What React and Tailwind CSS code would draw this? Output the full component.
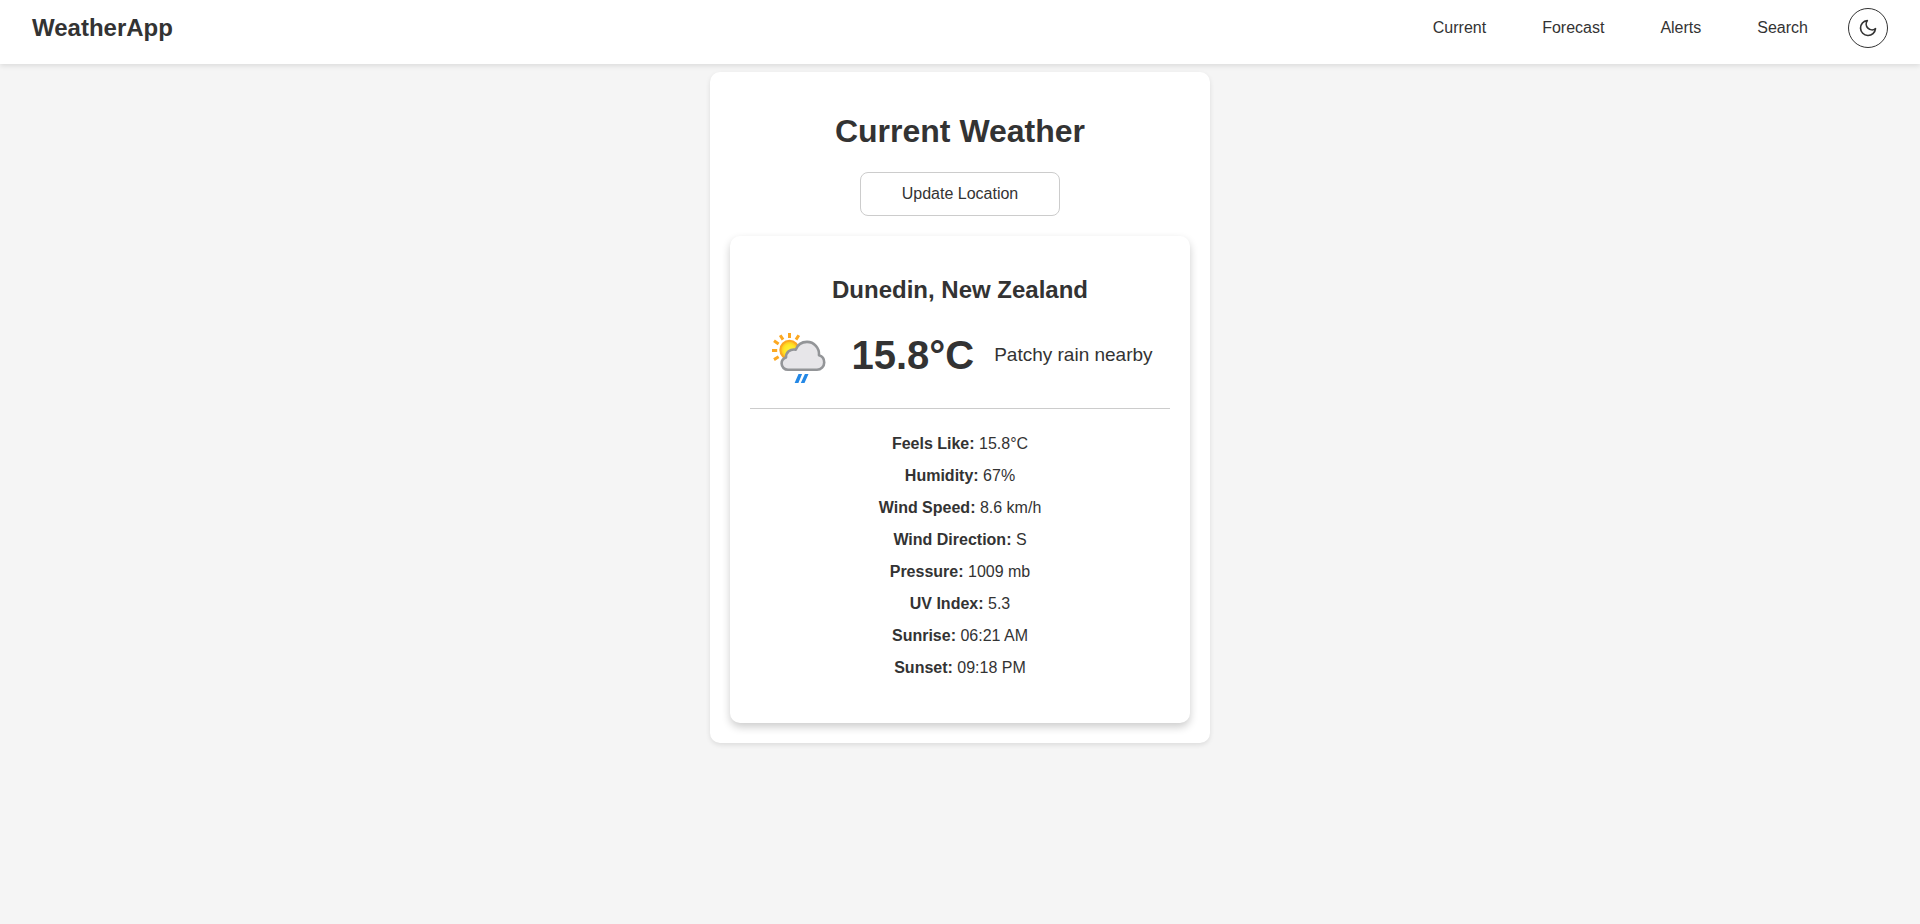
import { FiMoon } from "react-icons/fi";

const links = ["Current", "Forecast", "Alerts", "Search"];

const details = [
  ["Feels Like", "15.8°C"],
  ["Humidity", "67%"],
  ["Wind Speed", "8.6 km/h"],
  ["Wind Direction", "S"],
  ["Pressure", "1009 mb"],
  ["UV Index", "5.3"],
  ["Sunrise", "06:21 AM"],
  ["Sunset", "09:18 PM"],
];

function PatchyRainIcon() {
  return (
    <svg viewBox="0 0 64 64" className="size-16 shrink-0" role="img" aria-label="Patchy rain">
      <defs>
        <radialGradient id="sun">
          <stop offset="0" stopColor="#fff23a" />
          <stop offset="0.6" stopColor="#ffe626" />
          <stop offset="1" stopColor="#fdb81f" />
        </radialGradient>
      </defs>
      <g stroke="#fca821" strokeWidth="3">
        <path d="M22.5 10v5M31.8 12.2l-2.8 4.4M13.2 12.2l2.8 4.4M7 17.8l4.6 3.2M5 27.5h5.2M7 36.6l4.6-2.8" />
      </g>
      <circle cx="22.5" cy="27" r="9.2" fill="url(#sun)" stroke="#fca821" strokeWidth="2" />
      <path
        d="M21 46.8C17.5 46.8 14.6 44 14.6 40.6C14.6 37.8 16.4 35.4 19 34.6C18.8 29.6 23 25.6 28.8 26.6C30.5 22 34.8 18.9 40 18.9C47 18.9 52.6 24.8 52 32.2C55 33 57.2 35.8 57.2 39.4C57.2 43.6 54 46.8 50 46.8Z"
        fill="#e7e6e9"
        stroke="#939598"
        strokeWidth="2.6"
        strokeLinejoin="round"
      />
      <path d="M31.5 51h3.6l-3.7 9h-3.8zM37.9 51h3.6l-4 9h-3.7z" fill="#2488e6" />
    </svg>
  );
}

export default function App() {
  return (
    <div className="min-h-screen bg-[#f5f5f5] font-['Liberation_Sans',Arial,sans-serif] text-base text-[#333]">
      <header className="flex items-center justify-between bg-white px-8 pt-2 pb-4 shadow-[0_2px_5px_rgba(0,0,0,0.1)]">
        <div className="text-2xl font-bold">WeatherApp</div>
        <nav className="flex items-center gap-5">
          <ul className="flex gap-4">
            {links.map((link) => (
              <li key={link}>
                <a href={"#" + link.toLowerCase()} className="block px-5 leading-5">
                  {link}
                </a>
              </li>
            ))}
          </ul>
          <button
            type="button"
            aria-label="Toggle dark mode"
            className="flex size-10 items-center justify-center rounded-full border border-[#333]"
          >
            <FiMoon className="size-5" />
          </button>
        </nav>
      </header>

      <main className="mx-auto mt-2 max-w-[500px] rounded-[10px] bg-white p-5 text-center shadow-[0_2px_5px_rgba(0,0,0,0.1)]">
        <h1 className="mt-[21px] mb-[23px] text-[32px] leading-9 font-bold">Current Weather</h1>
        <button type="button" className="h-11 w-[200px] rounded-lg border border-[#ccc]">
          Update Location
        </button>

        <section className="mt-5 rounded-[10px] bg-white p-5 shadow-[0_4px_8px_rgba(0,0,0,0.2)]">
          <h2 className="mt-5 mb-[19px] text-2xl leading-7 font-bold">Dunedin, New Zealand</h2>
          <div className="flex items-center justify-center gap-5 border-b border-[#ccc] pb-[21px]">
            <PatchyRainIcon />
            <span className="text-[40px] leading-none font-bold">15.8°C</span>
            <span className="text-[19px]">Patchy rain nearby</span>
          </div>
          <ul className="pt-[19px] pb-[19px] leading-8">
            {details.map(([label, value]) => (
              <li key={label}>
                <strong>{label}:</strong> {value}
              </li>
            ))}
          </ul>
        </section>
      </main>
    </div>
  );
}
